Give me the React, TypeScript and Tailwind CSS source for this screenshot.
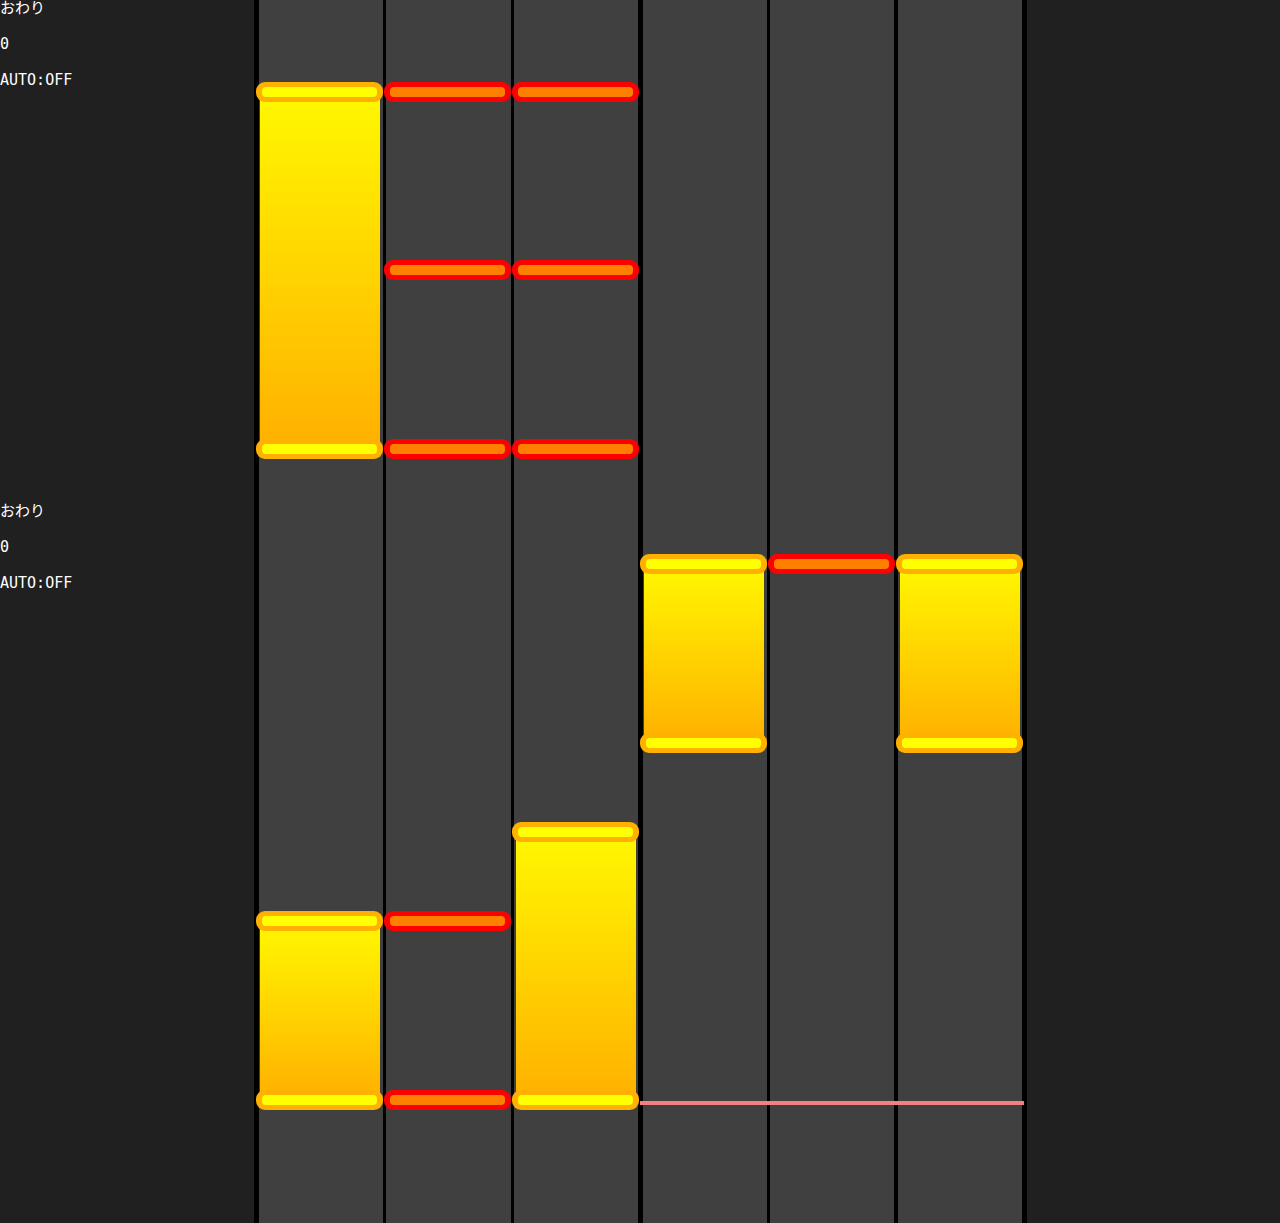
import React from "react";

type Note = { lane: number; y: number };
type Hold = { lane: number; from: number; to: number };

// lane strips between the black separators, left to right
const LANES = [
  "w-[124px] ml-[5px]",
  "w-[125px] ml-[3px]",
  "w-[124px] ml-[3px]",
  "w-[124px] ml-[5px]",
  "w-[124px] ml-[3px]",
  "w-[124px] ml-[4px]",
];

const TAPS: Note[] = [
  { lane: 1, y: 92 },
  { lane: 2, y: 92 },
  { lane: 1, y: 270 },
  { lane: 2, y: 270 },
  { lane: 1, y: 449 },
  { lane: 2, y: 449 },
  { lane: 4, y: 564 },
  { lane: 1, y: 921 },
  { lane: 1, y: 1100 },
];

const HOLDS: Hold[] = [
  { lane: 0, from: 92, to: 449 },
  { lane: 3, from: 564, to: 743 },
  { lane: 5, from: 564, to: 743 },
  { lane: 2, from: 832, to: 1100 },
  { lane: 0, from: 921, to: 1100 },
];

const STATUS = ["おわり", "0", "AUTO:OFF"];

function Head({ lane, y, kind }: { lane: number; y: number; kind: "tap" | "hold" }) {
  const outer = kind === "tap" ? "bg-[#ff0000]" : "bg-[#ffb000]";
  const inner = kind === "tap" ? "bg-[#ff8000]" : "bg-[#ffff00]";
  return (
    <div
      className={`absolute z-20 h-[20px] w-[127px] rounded-[9px] px-[6px] py-[5px] ${outer}`}
      style={{ left: 2 + lane * 128, top: y - 10 }}
    >
      <div className={`h-[10px] w-full rounded-[4px] ${inner}`} />
    </div>
  );
}

function StatusBlock({ first }: { first?: boolean }) {
  return (
    <div className={`flex h-[503px] flex-col ${first ? "-mt-[10px]" : ""}`}>
      {STATUS.map((t) => (
        <div key={t} className="h-[36px] leading-[36px] whitespace-nowrap">
          {t}
        </div>
      ))}
    </div>
  );
}

export default function App() {
  return (
    <div className="flex h-[1223px] w-[1280px] overflow-hidden bg-[#202020] text-white">
      <div
        className="flex w-[254px] shrink-0 flex-col text-[15px]"
        style={{ fontFamily: '"DejaVu Sans Mono", "Noto Sans CJK JP", monospace' }}
      >
        <StatusBlock first />
        <StatusBlock />
      </div>

      <div className="relative flex h-full w-[773px] shrink-0 bg-black pr-[5px]">
        {LANES.map((cls, i) => (
          <div key={i} className={`h-full bg-[#404040] ${cls}`} />
        ))}

        {/* chart notes sit on the lane canvas at their beat positions */}
        {HOLDS.map((h, i) => (
          <div
            key={`b${i}`}
            className="absolute z-10 w-[120px] bg-gradient-to-b from-[#fff800] to-[#ffb000]"
            style={{ left: 6 + h.lane * 128, top: h.from, height: h.to - h.from }}
          />
        ))}

        <div className="absolute left-[386px] top-[1101px] z-10 h-[4px] w-[384px] bg-[#f58080]" />

        {HOLDS.map((h, i) => (
          <React.Fragment key={`h${i}`}>
            <Head lane={h.lane} y={h.from} kind="hold" />
            <Head lane={h.lane} y={h.to} kind="hold" />
          </React.Fragment>
        ))}
        {TAPS.map((n, i) => (
          <Head key={`t${i}`} lane={n.lane} y={n.y} kind="tap" />
        ))}
      </div>
    </div>
  );
}
